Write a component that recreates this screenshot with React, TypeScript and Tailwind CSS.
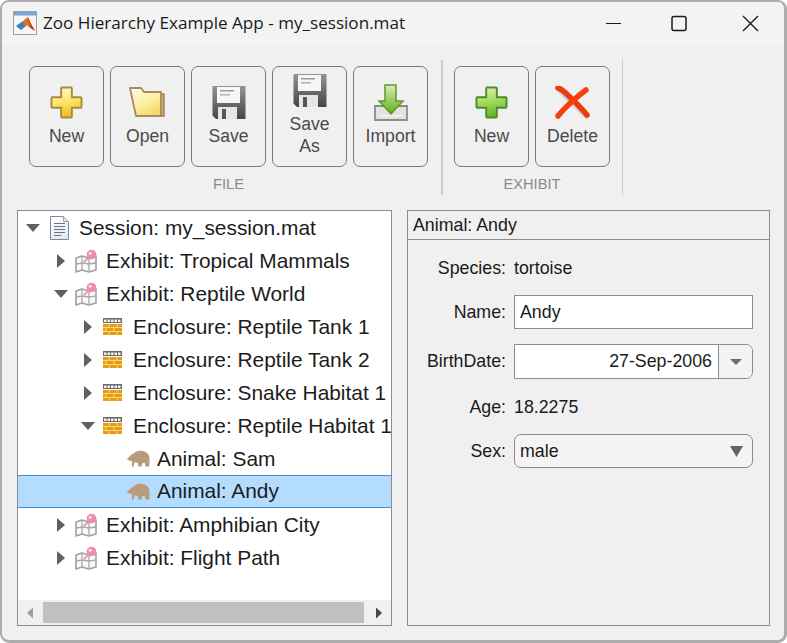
import React from "react";

const sans = { fontFamily: '"Liberation Sans", Arial, sans-serif' };

function Plus({ id, stops, stroke }: { id: string; stops: [string, string, string]; stroke: string }) {
  return (
    <svg width="33" height="33" viewBox="0 0 34 34">
      <defs>
        <linearGradient id={id} x1="0" y1="0" x2="0.2" y2="1">
          <stop offset="0" stopColor={stops[0]} />
          <stop offset="0.5" stopColor={stops[1]} />
          <stop offset="1" stopColor={stops[2]} />
        </linearGradient>
      </defs>
      <path d="M12.500 1.500h9a1 1 0 0 1 1 1v9h9a1 1 0 0 1 1 1v9a1 1 0 0 1-1 1h-9v9a1 1 0 0 1-1 1h-9a1 1 0 0 1-1-1v-9h-9a1 1 0 0 1-1-1v-9a1 1 0 0 1 1-1h9v-9a1 1 0 0 1 1-1z" fill={`url(#${id})`} stroke={stroke} strokeWidth="2" />
    </svg>
  );
}

function FolderIcon() {
  return (
    <svg width="37" height="34" viewBox="0 1 37 34">
      <defs>
        <linearGradient id="fold" x1="0" y1="0" x2="0.6" y2="1">
          <stop offset="0" stopColor="#fffef0" />
          <stop offset="0.6" stopColor="#fdf0a0" />
          <stop offset="1" stopColor="#f4d870" />
        </linearGradient>
      </defs>
      <path d="M11 6l3 3h21v22h-5z" fill="#c9ad7c" stroke="#a08350" strokeWidth="1.500" />
      <path d="M1 3h11l3 4h17v24H7z" fill="url(#fold)" stroke="#a88c58" strokeWidth="1.800" strokeLinejoin="round" />
    </svg>
  );
}

function SaveIcon({ id }: { id: string }) {
  return (
    <svg width="34" height="33" viewBox="0 0 34 33">
      <defs>
        <linearGradient id={id} x1="0" y1="0" x2="0" y2="1">
          <stop offset="0" stopColor="#949494" />
          <stop offset="1" stopColor="#454545" />
        </linearGradient>
      </defs>
      <path d="M0.500 0h33v33H4l-3.500-3.500z" fill={`url(#${id})`} />
      <rect x="5" y="1" width="23" height="16" fill="#f6f6f6" />
      <rect x="8" y="4" width="14" height="1.500" fill="#9a9a9a" />
      <rect x="8" y="8" width="10" height="1.500" fill="#b4b4b4" />
      <rect x="6" y="21" width="19" height="12" fill="#e6e6e6" />
      <rect x="10" y="23" width="4" height="10" fill="#555" />
    </svg>
  );
}

function ImportIcon() {
  return (
    <svg width="34" height="37" viewBox="0 0 34 37" className="-mt-[2px]">
      <defs>
        <linearGradient id="arr" x1="0" y1="0" x2="0" y2="1">
          <stop offset="0" stopColor="#d8eeb0" />
          <stop offset="1" stopColor="#5fae1c" />
        </linearGradient>
      </defs>
      <path d="M1 22h32v14H1z" fill="#e2e2e2" stroke="#8c8c8c" strokeWidth="1.800" />
      <rect x="5" y="31" width="24" height="1.500" fill="#f4f4f4" />
      <path d="M11 1h11v16h7L17 30 5 17h6z" fill="url(#arr)" stroke="#5c9a2c" strokeWidth="1.500" />
    </svg>
  );
}

function DeleteIcon() {
  return (
    <svg width="36" height="34" viewBox="0 0 36 34">
      <path d="M4 4l29 28" stroke="#b8c4d4" strokeWidth="5" opacity="0.6" />
      <path d="M3 2c4 1 8 5 15 12 6 6 10 10 14 15" stroke="#f03c0c" strokeWidth="5.500" fill="none" strokeLinecap="round" />
      <path d="M31 4C24 9 10 21 3 30" stroke="#f5400e" strokeWidth="5.500" fill="none" strokeLinecap="round" />
    </svg>
  );
}

function MatlabIcon() {
  return (
    <svg width="24" height="24" viewBox="0 0 24 24">
      <rect x="0.500" y="0.500" width="23" height="23" fill="#f6f6f6" stroke="#a0a0a0" />
      <rect x="1" y="1" width="22" height="3.500" fill="#7aa6d4" />
      <path d="M3 15l7-5 3 5-5 4z" fill="#3c7fc4" />
      <path d="M10 10l5-4 3 7 4 7-5-3-3-3-2 2z" fill="#e0701e" />
      <path d="M15 6l3 7 4 7-4-3-2-6z" fill="#b8320f" />
    </svg>
  );
}

function DocIcon() {
  return (
    <svg width="19" height="24" viewBox="0 0 19 24">
      <defs>
        <linearGradient id="docg" x1="0" y1="0" x2="0.3" y2="1">
          <stop offset="0" stopColor="#ffffff" />
          <stop offset="1" stopColor="#e2ecf6" />
        </linearGradient>
      </defs>
      <path d="M0.500 0.500h13l5 5v18H0.500z" fill="url(#docg)" stroke="#7d8894" />
      <path d="M13.500 0.500v5h5" fill="#dfe6ee" stroke="#9aa3ad" />
      {[7, 10, 13, 16].map((y) => (
        <rect key={y} x="4" y={y} width="11" height="1" fill="#6d7680" />
      ))}
      <rect x="4" y="19" width="7" height="1" fill="#6d7680" />
    </svg>
  );
}

function MapIcon() {
  return (
    <svg width="23" height="24" viewBox="0 0 23 24">
      <path d="M1 9l6-2 7 2 7-2v14l-7 2-7-2-6 2z" fill="#fbfbfb" stroke="#a0a0a0" strokeWidth="1.600" strokeLinejoin="round" />
      <path d="M7 7v14M14 9v14M1 15l6-1 7 1 7-1" fill="none" stroke="#a8a8a8" strokeWidth="1.300" />
      <path d="M9 13l6-6" stroke="#d58a9e" strokeWidth="1.600" />
      <circle cx="16.500" cy="5.500" r="4.800" fill="#ee8ea8" />
      <circle cx="15.200" cy="4.200" r="1.500" fill="#fde4ea" />
    </svg>
  );
}

function BrickIcon() {
  return (
    <svg width="19" height="17" viewBox="0 0 19 17">
      <rect x="0" y="0" width="19" height="5" fill="#6a6a6a" />
      {[1, 4.500, 8, 11.500, 15].map((x) => (
        <rect key={x} x={x} y="1.500" width="2.500" height="2.500" fill="#f4f4f4" />
      ))}
      <rect x="0" y="6" width="19" height="11" fill="#e89c10" />
      <path d="M0 9.500h19M0 13.500h19M6 6v3.500M14 6v3.500M3 10v3.500M11 10v3.500M6 14v3M14 14v3" stroke="#fbd58a" strokeWidth="1" fill="none" />
    </svg>
  );
}

function BearIcon() {
  return (
    <svg width="23" height="17" viewBox="0 0 23 17">
      <path d="M0 9c1-1.500 3-2.500 4-4 .6-.8 1.500-1.300 2.500-1.300C8 1.500 11 .6 14 .8c4 .2 7 2 8 5 .8 3 .6 7 .2 10.700h-3.700l-.8-3.700-2.700.6-.5 3.100h-3.200l-.5-3.700-3.400-.5-.7 4.200H4.700l.4-5.300C3.500 10.800 1 10.700 0 9z" fill="#b99a7a" />
    </svg>
  );
}

type Node = {
  text: string;
  caret?: "open" | "closed";
  caretX?: number;
  icon: React.ReactNode;
  iconX: number;
  textX: number;
  selected?: boolean;
};

const exhibit = (text: string, caret: "open" | "closed"): Node => ({ text, caret, caretX: 54, icon: <MapIcon />, iconX: 75, textX: 106 });
const enclosure = (text: string, caret: "open" | "closed"): Node => ({ text, caret, caretX: 81, icon: <BrickIcon />, iconX: 103, textX: 133 });
const animal = (text: string, selected?: boolean): Node => ({ text, icon: <BearIcon />, iconX: 127, textX: 157, selected });

const nodes: Node[] = [
  { text: "Session: my_session.mat", caret: "open", caretX: 26, icon: <DocIcon />, iconX: 50, textX: 79 },
  exhibit("Exhibit: Tropical Mammals", "closed"),
  exhibit("Exhibit: Reptile World", "open"),
  enclosure("Enclosure: Reptile Tank 1", "closed"),
  enclosure("Enclosure: Reptile Tank 2", "closed"),
  enclosure("Enclosure: Snake Habitat 1", "closed"),
  enclosure("Enclosure: Reptile Habitat 1", "open"),
  animal("Animal: Sam"),
  animal("Animal: Andy", true),
  exhibit("Exhibit: Amphibian City", "closed"),
  exhibit("Exhibit: Flight Path", "closed"),
];

function Caret({ kind }: { kind: "open" | "closed" }) {
  return kind === "open" ? (
    <svg width="14" height="8" viewBox="0 0 14 8" className="block">
      <path d="M0 0h14L7 8z" fill="#606060" />
    </svg>
  ) : (
    <svg width="8" height="14" viewBox="0 0 8 14" className="block">
      <path d="M0 0l8 7-8 7z" fill="#606060" />
    </svg>
  );
}

function TreeRow({ n }: { n: Node }) {
  const base = 18;
  const caretW = 14;
  const caretGap = n.iconX - ((n.caretX ?? n.iconX) + caretW);
  return (
    <div
      className={`h-[33px] flex items-center whitespace-nowrap ${n.selected ? "bg-[#b4dcff] border-y border-[#3d8fd6] pb-[1px]" : ""}`}
      style={{ paddingLeft: (n.caret ? (n.caretX as number) : n.iconX) - base }}
    >
      {n.caret && (
        <span className="shrink-0 w-[14px] flex justify-center" style={{ marginRight: caretGap }}>
          <Caret kind={n.caret} />
        </span>
      )}
      <span className="shrink-0 flex items-center justify-start" style={{ width: n.textX - n.iconX }}>
        {n.icon}
      </span>
      <span className="text-[20.9px] text-[#1c1c1c]">{n.text}</span>
    </div>
  );
}

function ToolButton({ label, icon, two }: { label: React.ReactNode; icon: React.ReactNode; two?: boolean }) {
  return (
    <div
      className={`w-[75px] h-[101px] rounded-[7px] border border-[#7a7a7a] bg-[#f0f0f0] flex flex-col items-center ${two ? "pt-[7px]" : "pt-[19px]"}`}
    >
      <div className="h-[34px] flex items-start justify-center">{icon}</div>
      <div className="mt-[5px] text-[17.6px] leading-[22px] text-[#4a4a4a] text-center">{label}</div>
    </div>
  );
}

function FormLabel({ children }: { children: React.ReactNode }) {
  return <div className="w-[98px] mr-[8px] text-right shrink-0">{children}</div>;
}

export default function App() {
  return (
    <div style={sans} className="w-[787px] h-[643px] overflow-hidden bg-white">
      <div className="w-full h-full rounded-[9px] border-t-2 border-l-2 border-r-[3px] border-b-[3px] border-[#acacac] bg-[#f0f0f0] overflow-hidden flex flex-col">
        {/* title bar */}
        <div className="h-[43px] shrink-0 bg-[#f3f3f3] flex items-center pl-[11px] pb-[2px]">
          <MatlabIcon />
          <span className="ml-[6px] text-[#1a1a1a] text-[17.1px] whitespace-nowrap" style={{ fontFamily: '"Open Sans", sans-serif' }}>
            Zoo Hierarchy Example App - my_session.mat
          </span>
          <div className="ml-auto flex items-center text-black pr-[10px]">
            <svg width="71" height="24" viewBox="0 0 71 24">
              <path d="M20 12.500h15" stroke="#1a1a1a" strokeWidth="1.200" />
            </svg>
            <svg width="71" height="24" viewBox="0 0 71 24">
              <rect x="15" y="5.500" width="14" height="14" rx="2" fill="none" stroke="#1a1a1a" strokeWidth="1.500" />
            </svg>
            <svg width="46" height="24" viewBox="0 0 46 24">
              <path d="M15 5l15 15M30 5L15 20" stroke="#1a1a1a" strokeWidth="1.400" />
            </svg>
          </div>
        </div>

        {/* toolbar */}
        <div className="mt-[15px] h-[135px] shrink-0 pl-[27px] flex">
          <div className="pr-[13px] border-r-2 border-[#cccccc] flex flex-col">
            <div className="mt-[6px] flex gap-[6px]">
              <ToolButton label="New" icon={<Plus id="py" stops={["#fffce0", "#fde870", "#f3bf24"]} stroke="#a88a3c" />} />
              <ToolButton label="Open" icon={<FolderIcon />} />
              <ToolButton label="Save" icon={<SaveIcon id="d1" />} />
              <ToolButton two label={<>Save<br />As</>} icon={<SaveIcon id="d2" />} />
              <ToolButton label="Import" icon={<ImportIcon />} />
            </div>
            <div className="mt-[8px] text-center text-[14.7px] leading-[18px] text-[#8a8a8a]">FILE</div>
          </div>
          <div className="pl-[11px] pr-[12px] border-r border-[#cccccc] flex flex-col">
            <div className="mt-[6px] flex gap-[6px]">
              <ToolButton label="New" icon={<Plus id="pg" stops={["#e4f4b8", "#a8dc60", "#68b82c"]} stroke="#4e8a30" />} />
              <ToolButton label="Delete" icon={<DeleteIcon />} />
            </div>
            <div className="mt-[8px] text-center text-[14.7px] leading-[18px] text-[#8a8a8a]">EXHIBIT</div>
          </div>
        </div>

        {/* main */}
        <div className="mt-[15px] pl-[15px] flex gap-[15px]">
          <div className="w-[375px] h-[416px] border border-[#8c8c8c] bg-white flex flex-col overflow-hidden">
            <div className="flex-1 overflow-hidden">
              {nodes.map((n) => (
                <TreeRow key={n.text} n={n} />
              ))}
            </div>
            <div className="h-[25px] bg-[#f0f0f0] flex items-center shrink-0">
              <svg width="25" height="14" viewBox="0 0 25 14" className="shrink-0">
                <path d="M15 1.500v11L9 7z" fill="#9e9e9e" />
              </svg>
              <div className="w-[321px] h-[21px] bg-[#c0c0c0]" />
              <svg width="27" height="14" viewBox="0 0 27 14" className="shrink-0">
                <path d="M12 1.500v11L18 7z" fill="#474747" />
              </svg>
            </div>
          </div>

          <div className="w-[363px] h-[416px] border border-[#8c8c8c] text-[17.8px] text-[#1a1a1a] flex flex-col">
            <div className="h-[29px] border-b border-[#8c8c8c] pl-[5px] flex items-center shrink-0">Animal: Andy</div>
            <div className="pt-[11px] flex flex-col">
              <div className="h-[34px] flex items-center">
                <FormLabel>Species:</FormLabel>
                <span>tortoise</span>
              </div>
              <div className="mt-[10px] h-[34px] flex items-center">
                <FormLabel>Name:</FormLabel>
                <div className="w-[239px] h-[34px] bg-white border border-[#8c8c8c] pl-[5px] flex items-center">Andy</div>
              </div>
              <div className="mt-[15px] h-[35px] flex items-center">
                <FormLabel>BirthDate:</FormLabel>
                <div className="w-[239px] h-[35px] border border-[#8c8c8c] rounded-r-[7px] flex overflow-hidden">
                  <div className="flex-1 bg-white pr-[6px] flex items-center justify-end">27-Sep-2006</div>
                  <div className="w-[34px] border-l border-[#8c8c8c] bg-[#f3f3f3] flex items-center justify-center">
                    <svg width="12" height="6" viewBox="0 0 12 6">
                      <path d="M0 0h12L6 6z" fill="#6e6e6e" />
                    </svg>
                  </div>
                </div>
              </div>
              <div className="mt-[11px] h-[34px] flex items-center">
                <FormLabel>Age:</FormLabel>
                <span>18.2275</span>
              </div>
              <div className="mt-[10px] h-[34px] flex items-center">
                <FormLabel>Sex:</FormLabel>
                <div className="w-[239px] h-[34px] bg-[#f4f4f4] border border-[#8c8c8c] rounded-[7px] pl-[5px] pr-[9px] flex items-center justify-between">
                  <span>male</span>
                  <svg width="13" height="11" viewBox="0 0 13 11">
                    <path d="M0 0h13L6.500 11z" fill="#646464" />
                  </svg>
                </div>
              </div>
            </div>
          </div>
        </div>
      </div>
    </div>
  );
}
